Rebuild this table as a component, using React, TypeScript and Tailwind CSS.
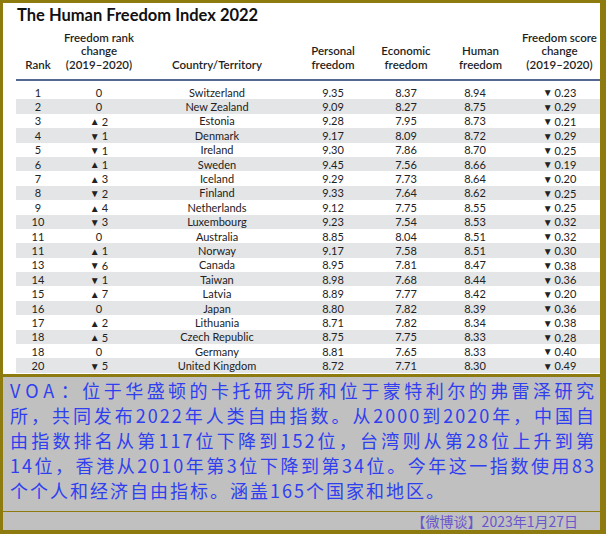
const rows = [
  { rank: "1", change: "0", country: "Switzerland", personal: "9.35", economic: "8.37", human: "8.94", score: "0.23" },
  { rank: "2", change: "0", country: "New Zealand", personal: "9.09", economic: "8.27", human: "8.75", score: "0.29" },
  { rank: "3", change: "+2", country: "Estonia", personal: "9.28", economic: "7.95", human: "8.73", score: "0.21" },
  { rank: "4", change: "-1", country: "Denmark", personal: "9.17", economic: "8.09", human: "8.72", score: "0.29" },
  { rank: "5", change: "-1", country: "Ireland", personal: "9.30", economic: "7.86", human: "8.70", score: "0.25" },
  { rank: "6", change: "+1", country: "Sweden", personal: "9.45", economic: "7.56", human: "8.66", score: "0.19" },
  { rank: "7", change: "+3", country: "Iceland", personal: "9.29", economic: "7.73", human: "8.64", score: "0.20" },
  { rank: "8", change: "-2", country: "Finland", personal: "9.33", economic: "7.64", human: "8.62", score: "0.25" },
  { rank: "9", change: "+4", country: "Netherlands", personal: "9.12", economic: "7.75", human: "8.55", score: "0.25" },
  { rank: "10", change: "-3", country: "Luxembourg", personal: "9.23", economic: "7.54", human: "8.53", score: "0.32" },
  { rank: "11", change: "0", country: "Australia", personal: "8.85", economic: "8.04", human: "8.51", score: "0.32" },
  { rank: "11", change: "+1", country: "Norway", personal: "9.17", economic: "7.58", human: "8.51", score: "0.30" },
  { rank: "13", change: "-6", country: "Canada", personal: "8.95", economic: "7.81", human: "8.47", score: "0.38" },
  { rank: "14", change: "-1", country: "Taiwan", personal: "8.98", economic: "7.68", human: "8.44", score: "0.36" },
  { rank: "15", change: "+7", country: "Latvia", personal: "8.89", economic: "7.77", human: "8.42", score: "0.20" },
  { rank: "16", change: "0", country: "Japan", personal: "8.80", economic: "7.82", human: "8.39", score: "0.36" },
  { rank: "17", change: "+2", country: "Lithuania", personal: "8.71", economic: "7.82", human: "8.34", score: "0.38" },
  { rank: "18", change: "+5", country: "Czech Republic", personal: "8.75", economic: "7.75", human: "8.33", score: "0.28" },
  { rank: "18", change: "0", country: "Germany", personal: "8.81", economic: "7.65", human: "8.33", score: "0.40" },
  { rank: "20", change: "-5", country: "United Kingdom", personal: "8.72", economic: "7.71", human: "8.30", score: "0.49" },
];

const lines = [
  "位于华盛顿的卡托研究所和位于蒙特利尔的弗雷泽研究",
  "所，共同发布2022年人类自由指数。从2000到2020年，中国自",
  "由指数排名从第117位下降到152位，台湾则从第28位上升到第",
  "14位，香港从2010年第3位下降到第34位。今年这一指数使用83",
];

const cols = "grid grid-cols-[44px_78px_158px_74px_72px_77px_81px]";

function Change({ value }: { value: string }) {
  if (value === "0") return <span>0</span>;
  const up = value.startsWith("+");
  return (
    <span className="inline-flex items-center gap-[2px]">
      <span className="text-[10px]">{up ? "▲" : "▼"}</span>
      {value.slice(1)}
    </span>
  );
}

function FreedomTable() {
  return (
    <div className="h-[373px] bg-white pl-[13px] font-['Lato',sans-serif] text-[#222]">
      {/* Title */}
      <h1 className="mt-[2px] pl-[1px] text-[16.5px] leading-[20px] font-bold text-[#111]">
        The Human Freedom Index 2022
      </h1>

      {/* Header */}
      <div className={`${cols} h-[56px] items-end border-b-2 border-[#56688f] pb-[8px] text-center text-[11.5px] leading-[13.5px] font-semibold text-[#1f1f1f]`}>
        <div>Rank</div>
        <div>
          Freedom rank
          <br />
          change
          <br />
          (2019–2020)
        </div>
        <div>Country/Territory</div>
        <div>
          Personal
          <br />
          freedom
        </div>
        <div>
          Economic
          <br />
          freedom
        </div>
        <div>
          Human
          <br />
          freedom
        </div>
        <div>
          Freedom score
          <br />
          change
          <br />
          (2019–2020)
        </div>
      </div>

      {/* Rows */}
      <div className="pt-[4px] text-[11px]">
        {rows.map((r, i) => (
          <div
            key={i}
            className={`${cols} h-[14.4px] items-center text-center leading-none ${i % 2 === 1 ? "bg-[#e4e5e7]" : ""}`}
          >
            <div>{r.rank}</div>
            <div>
              <Change value={r.change} />
            </div>
            <div>{r.country}</div>
            <div>{r.personal}</div>
            <div>{r.economic}</div>
            <div className="pr-[11px]">{r.human}</div>
            <div>
              <span className="inline-flex items-center gap-[2px]">
                <span className="text-[10px]">▼</span>
                {r.score}
              </span>
            </div>
          </div>
        ))}
      </div>
    </div>
  );
}

export default function App() {
  return (
    <div className="flex h-[534px] w-[606px] flex-col bg-[#8d7b10] pt-[3px] pr-[6px] pb-[4px] pl-[3px]">
      <FreedomTable />

      {/* Caption */}
      <div className="mt-[3px] h-[135px] bg-[#c0c0c0] pt-[1px] pr-[4px] pl-[7px] font-['Noto_Sans_CJK_SC',sans-serif] text-[18px] leading-[25px] tracking-[2px] text-[#2f3ff0]">
        {lines.map((line, i) => (
          <div key={i} className="text-justify [text-align-last:justify]">
            {i === 0 && <span className="tracking-[5px]">VOA</span>}
            {i === 0 && "："}
            {line}
          </div>
        ))}
        <div>个个人和经济自由指标。涵盖165个国家和地区。</div>
      </div>

      {/* Footer */}
      <div className="mt-px flex h-[18px] items-center justify-end bg-[#c0c0c0] pr-[22px] font-['Noto_Sans_CJK_SC',sans-serif] text-[14px] leading-none text-[#6a56cc]">
        【微博谈】2023年1月27日
      </div>
    </div>
  );
}
